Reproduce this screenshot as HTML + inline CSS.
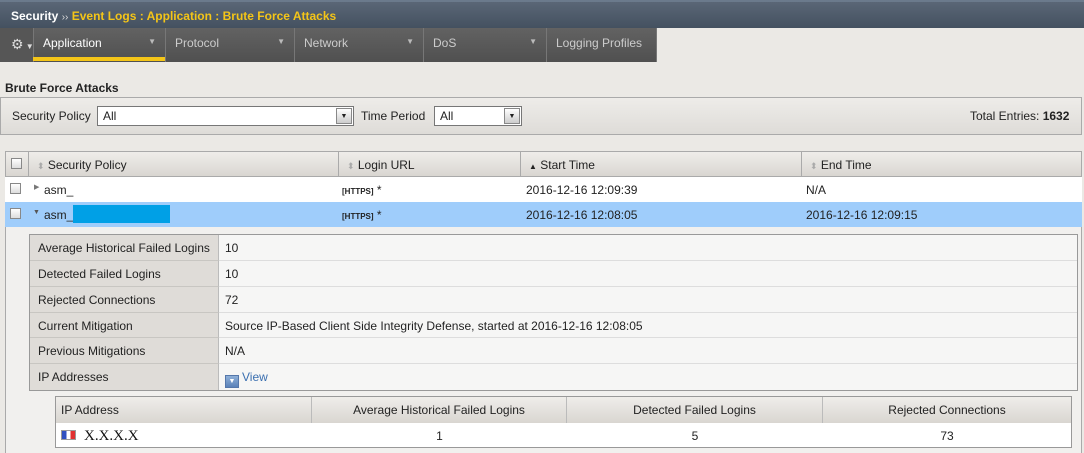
<!DOCTYPE html>
<html><head><style>
*{box-sizing:border-box;margin:0;padding:0}
body{width:1084px;height:453px;overflow:hidden;background:#ebe9e5;font-family:"Liberation Sans",Arial,sans-serif;font-size:12px;color:#222;position:relative}
.a{position:absolute}
.top{left:0;top:0;width:1084px;height:28px;background:linear-gradient(#5a6676,#445160);border-top:2px solid #6b7a8c}
.nav{left:0;top:28px;width:657px;height:34px;background:#565656}
.tab{top:28px;height:34px;border-left:1px solid #777;color:#ccc;font-size:12px;padding:8px 0 0 9px;background:linear-gradient(#626262,#505050)}
.tab i{position:absolute;right:9px;top:9px;font-style:normal;font-size:8px;color:#bbb}
.filter{left:0;top:97px;width:1082px;height:38px;border:1px solid #aaa;background:linear-gradient(#eeece9,#dedcd8)}
.sel{background:#fff;border:1px solid #777;height:20px;top:106px;padding:2px 5px}
.arr{position:absolute;right:1px;top:1px;width:16px;height:16px;border:1px solid #888;background:linear-gradient(#fff,#ccc);font-size:7px;text-align:center;line-height:15px}
.th{height:26px;top:151px;background:linear-gradient(#efedea,#d9d6d1);border-top:1px solid #aaa;border-bottom:1px solid #aaa;border-left:1px solid #aaa;padding:6px 0 0 8px;color:#222}
.cb{width:11px;height:11px;border:1px solid #888;background:linear-gradient(#fff,#ddd)}
.row{left:5px;width:1077px;height:25px}
.cell{padding:6px 0 0 0}
.lab{left:30px;width:189px;height:26px;background:#dfdcd8;border-bottom:1px solid #c8c6c2;border-right:1px solid #bbb;padding:6px 0 0 8px}
.val{left:219px;width:858px;height:26px;background:#f6f6f5;border-bottom:1px solid #ddd;padding:6px 0 0 6px}
.sh{top:397px;height:26px;background:linear-gradient(#efedea,#d9d6d1);border-right:1px solid #bbb;text-align:center;padding-top:6px}
.sd{top:423px;height:24px;background:#fff;text-align:center;padding-top:6px}
</style></head><body>
<div class="a top"></div>
<div class="a" style="left:11px;top:9px;color:#fff;font-weight:bold">Security <span style="font-size:10px;color:#ddd;font-weight:normal">››</span> <span style="color:#f4c518">Event Logs : Application : Brute Force Attacks</span></div>
<div class="a nav"></div>
<div class="a" style="left:11px;top:36px;color:#ddd;font-size:14px">⚙<span style="font-size:8px"> ▼</span></div>
<div class="a tab" style="left:33px;width:132px;color:#fff">Application<i>▼</i></div>
<div class="a" style="left:33px;top:57px;width:132px;height:4px;background:#f4c518"></div>
<div class="a tab" style="left:165px;width:129px">Protocol<i>▼</i></div>
<div class="a tab" style="left:294px;width:129px">Network<i>▼</i></div>
<div class="a tab" style="left:423px;width:123px">DoS<i>▼</i></div>
<div class="a tab" style="left:546px;width:111px;border-right:1px solid #777">Logging Profiles</div>
<div class="a" style="left:5px;top:81px;font-weight:bold">Brute Force Attacks</div>
<div class="a filter"></div>
<div class="a" style="left:12px;top:109px">Security Policy</div>
<div class="a sel" style="left:97px;width:257px">All<span class="arr">▼</span></div>
<div class="a" style="left:361px;top:109px">Time Period</div>
<div class="a sel" style="left:434px;width:88px">All<span class="arr">▼</span></div>
<div class="a" style="left:970px;top:109px">Total Entries: <b>1632</b></div>

<div class="a th" style="left:5px;width:23px;padding:6px 0 0 5px"><div class="cb"></div></div>
<div class="a th" style="left:28px;width:310px"><span style="color:#aaa;font-size:9px">⬍</span> Security Policy</div>
<div class="a th" style="left:338px;width:182px"><span style="color:#aaa;font-size:9px">⬍</span> Login URL</div>
<div class="a th" style="left:520px;width:281px"><span style="font-size:8px">▲</span> Start Time</div>
<div class="a th" style="left:801px;width:281px;border-right:1px solid #aaa"><span style="color:#aaa;font-size:9px">⬍</span> End Time</div>

<div class="a row" style="top:177px;background:#fff"></div>
<div class="a cb" style="left:10px;top:183px"></div>
<div class="a" style="left:34px;top:183px;font-size:7px;color:#777">▶</div>
<div class="a" style="left:44px;top:183px">asm_</div>
<div class="a" style="left:342px;top:183px"><span style="font-size:8px;font-weight:bold">[HTTPS]</span> *</div>
<div class="a" style="left:526px;top:183px">2016-12-16 12:09:39</div>
<div class="a" style="left:806px;top:183px">N/A</div>

<div class="a row" style="top:202px;height:25px;background:#9fcdfb"></div>
<div class="a cb" style="left:10px;top:208px"></div>
<div class="a" style="left:33px;top:209px;font-size:7px;color:#555">▼</div>
<div class="a" style="left:44px;top:208px">asm_</div>
<div class="a" style="left:73px;top:205px;width:97px;height:18px;background:#00a0e6"></div>
<div class="a" style="left:342px;top:208px"><span style="font-size:8px;font-weight:bold">[HTTPS]</span> *</div>
<div class="a" style="left:526px;top:208px">2016-12-16 12:08:05</div>
<div class="a" style="left:806px;top:208px">2016-12-16 12:09:15</div>

<div class="a" style="left:5px;top:227px;width:1077px;height:226px;background:#f1f0ee;border-left:1px solid #aaa;border-right:1px solid #aaa"></div>
<div class="a" style="left:29px;top:234px;width:1049px;height:157px;border:1px solid #999;background:#f6f6f5"></div>
<div class="a lab" style="top:235px">Average Historical Failed Logins</div><div class="a val" style="top:235px">10</div>
<div class="a lab" style="top:261px">Detected Failed Logins</div><div class="a val" style="top:261px">10</div>
<div class="a lab" style="top:287px">Rejected Connections</div><div class="a val" style="top:287px">72</div>
<div class="a lab" style="top:313px;height:25px">Current Mitigation</div><div class="a val" style="top:313px;height:25px">Source IP-Based Client Side Integrity Defense, started at 2016-12-16 12:08:05</div>
<div class="a lab" style="top:338px">Previous Mitigations</div><div class="a val" style="top:338px">N/A</div>
<div class="a lab" style="top:364px;border-bottom:none">IP Addresses</div><div class="a val" style="top:364px;border-bottom:none;color:#3a6fb0"><span style="display:inline-block;width:14px;height:13px;background:linear-gradient(#8fb0d8,#5b82b8);border:1px solid #57a;color:#fff;font-size:7px;text-align:center;line-height:12px;vertical-align:-2px;margin-right:3px">▼</span>View</div>

<div class="a" style="left:55px;top:396px;width:1017px;height:52px;border:1px solid #999;background:#fff"></div>
<div class="a sh" style="left:56px;width:256px;text-align:left;padding-left:5px">IP Address</div>
<div class="a sh" style="left:312px;width:255px">Average Historical Failed Logins</div>
<div class="a sh" style="left:567px;width:256px">Detected Failed Logins</div>
<div class="a sh" style="left:823px;width:248px;border-right:none">Rejected Connections</div>
<div class="a" style="left:61px;top:430px;width:15px;height:10px;background:linear-gradient(90deg,#3050c0 33%,#fff 33%,#fff 66%,#e03030 66%);border:1px solid #999"></div>
<div class="a" style="left:84px;top:428px;font-family:'Liberation Serif',serif;font-size:15px;color:#111">X.X.X.X</div>
<div class="a sd" style="left:312px;width:255px">1</div>
<div class="a sd" style="left:567px;width:256px">5</div>
<div class="a sd" style="left:823px;width:248px">73</div>
</body></html>
